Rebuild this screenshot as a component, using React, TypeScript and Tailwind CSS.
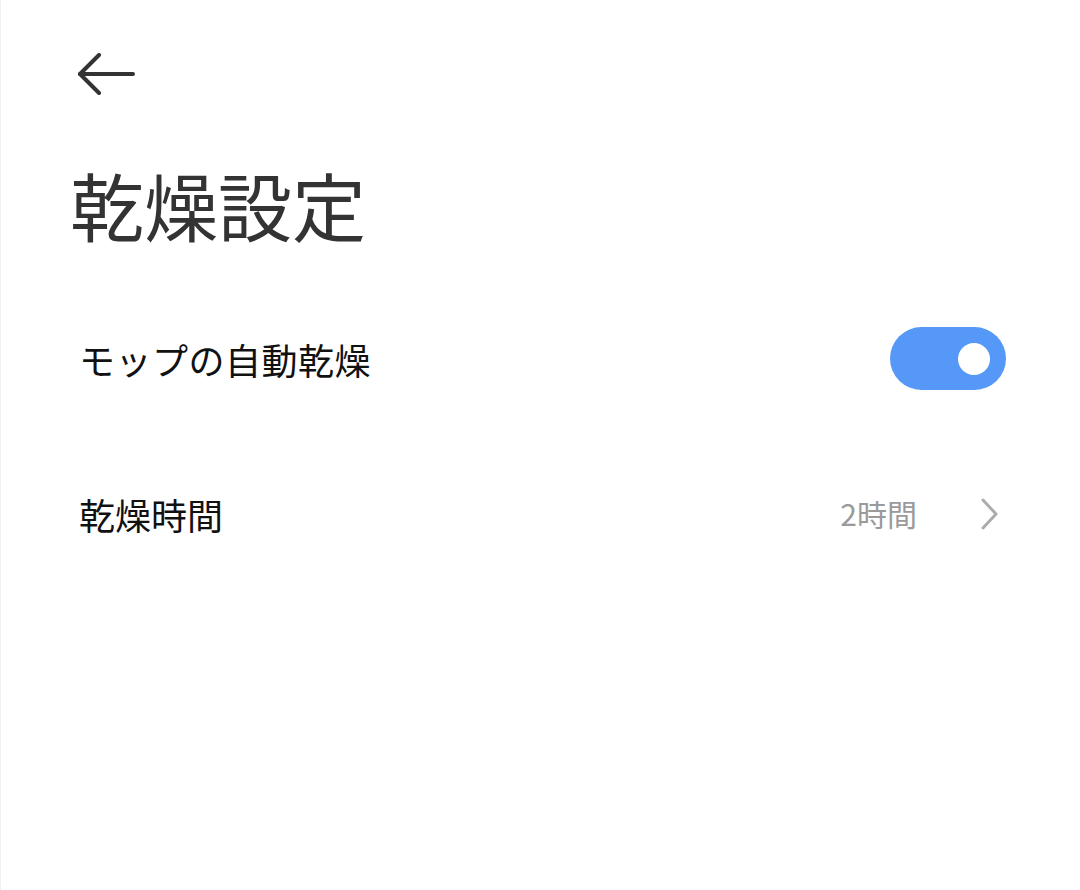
import React from 'react'

const font = { fontFamily: '"Noto Sans CJK JP", "Noto Sans", sans-serif' }

function BackArrow() {
  return (
    <svg width="60" height="44" viewBox="0 0 60 44" fill="none" stroke="#333333" strokeWidth="4" strokeLinecap="round" strokeLinejoin="round">
      <path d="M4 21 H57" />
      <path d="M23 2 L4 21 L23 40" />
    </svg>
  )
}

function Toggle() {
  return (
    <div className="flex items-center justify-end w-[116px] h-[63px] rounded-full bg-[#5598f8] pr-[16px]">
      <div className="w-[32px] h-[32px] rounded-full bg-white" />
    </div>
  )
}

function Chevron() {
  return (
    <svg width="20" height="32" viewBox="0 0 20 32" fill="none" stroke="#acacac" strokeWidth="3" strokeLinecap="round" strokeLinejoin="round" className="mr-[6px]">
      <path d="M3 2 L16 16 L3 30" />
    </svg>
  )
}

export default function App() {
  return (
    <div className="w-[1080px] h-[890px] bg-white border-l border-[#f0f0f0] flex flex-col" style={font}>
      <div className="pt-[53px] pl-[75px]">
        <BackArrow />
      </div>
      <h1 className="mt-[70px] pl-[69px] text-[74px] leading-none text-[#333333] font-normal">乾燥設定</h1>
      <div className="mt-[40px] flex flex-col pl-[78px] pr-[74px]">
        <div className="h-[155px] flex items-center justify-between">
          <span className="text-[36px] text-[#111111] tracking-[0.5px]">モップの自動乾燥</span>
          <Toggle />
        </div>
        <div className="h-[155px] flex items-center justify-between">
          <span className="text-[36px] text-[#111111]">乾燥時間</span>
          <div className="flex items-center gap-[63px]">
            <span className="text-[30px] text-[#9a9a9a]">2時間</span>
            <Chevron />
          </div>
        </div>
      </div>
    </div>
  )
}
